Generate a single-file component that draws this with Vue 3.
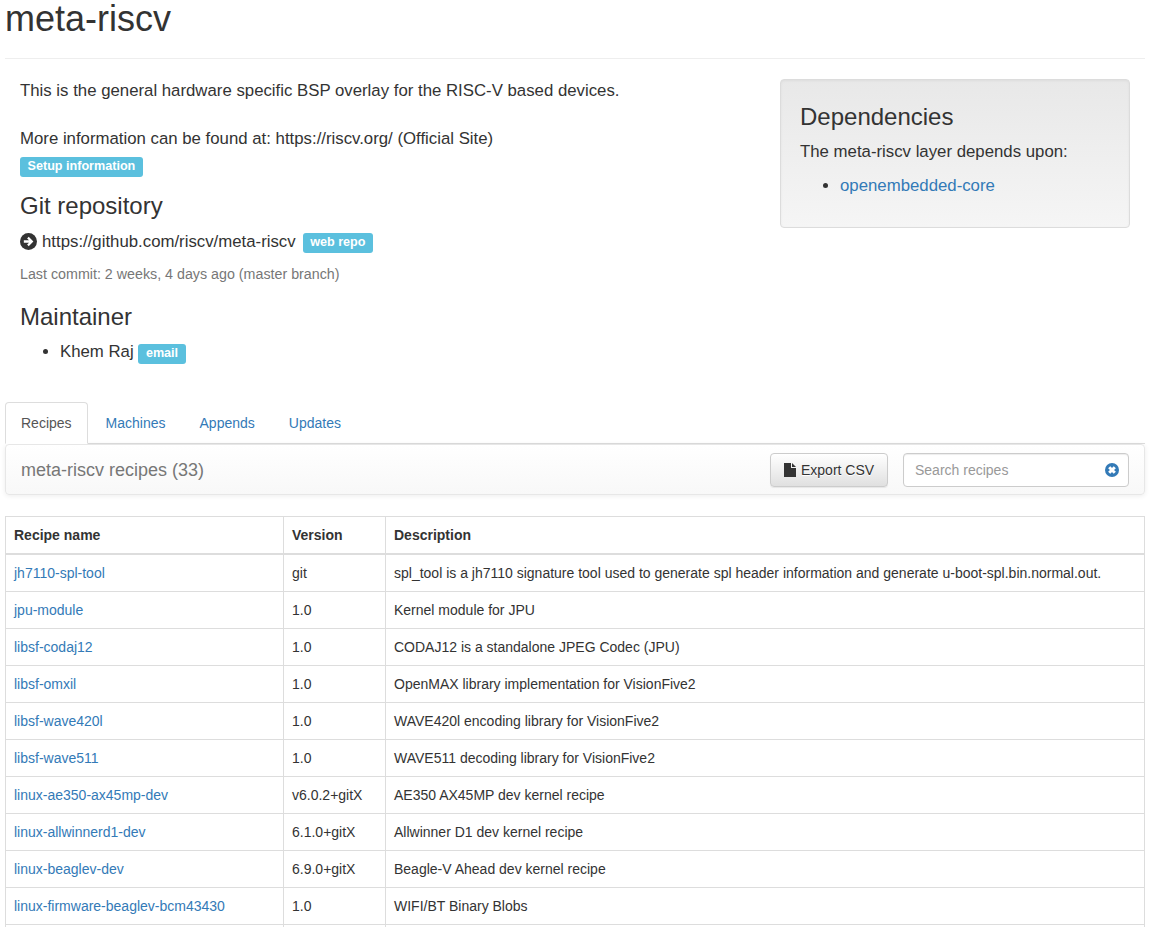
<script setup>
const tabs = ['Recipes', 'Machines', 'Appends', 'Updates']
const recipes = [
  ['jh7110-spl-tool', 'git', 'spl_tool is a jh7110 signature tool used to generate spl header information and generate u-boot-spl.bin.normal.out.'],
  ['jpu-module', '1.0', 'Kernel module for JPU'],
  ['libsf-codaj12', '1.0', 'CODAJ12 is a standalone JPEG Codec (JPU)'],
  ['libsf-omxil', '1.0', 'OpenMAX library implementation for VisionFive2'],
  ['libsf-wave420l', '1.0', 'WAVE420l encoding library for VisionFive2'],
  ['libsf-wave511', '1.0', 'WAVE511 decoding library for VisionFive2'],
  ['linux-ae350-ax45mp-dev', 'v6.0.2+gitX', 'AE350 AX45MP dev kernel recipe'],
  ['linux-allwinnerd1-dev', '6.1.0+gitX', 'Allwinner D1 dev kernel recipe'],
  ['linux-beaglev-dev', '6.9.0+gitX', 'Beagle-V Ahead dev kernel recipe'],
  ['linux-firmware-beaglev-bcm43430', '1.0', 'WIFI/BT Binary Blobs']
]
</script>

<template>
  <div class="page">
    <header class="page-header">
      <h1>meta-riscv</h1>
    </header>

    <section class="summary">
      <div class="info">
        <p class="intro">This is the general hardware specific BSP overlay for the RISC-V based devices.</p>
        <p class="intro more">More information can be found at: https://riscv.org/ (Official Site)</p>
        <a class="label setup" href="#">Setup information</a>

        <h3 class="git-title">Git repository</h3>
        <p class="repo">
          <svg class="arrow" viewBox="0 0 16 16" width="17" height="17">
            <circle cx="8" cy="8" r="8" fill="#333" />
            <path d="M8.200 3.600 12.600 8l-4.400 4.400-1.500-1.500 1.800-1.800H3.600V6.900h4.900L6.700 5.100z" fill="#fff" />
          </svg>
          <span class="repo-url">https://github.com/riscv/meta-riscv</span>
          <a class="label repo-label" href="#">web repo</a>
        </p>
        <p class="commit">Last commit: 2 weeks, 4 days ago (master branch)</p>

        <h3 class="maintainer-title">Maintainer</h3>
        <ul class="maintainers">
          <li>Khem Raj <a class="label repo-label" href="#">email</a></li>
        </ul>
      </div>

      <aside class="well">
        <h3>Dependencies</h3>
        <p>The meta-riscv layer depends upon:</p>
        <ul>
          <li><a href="#">openembedded-core</a></li>
        </ul>
      </aside>
    </section>

    <nav class="tabs">
      <a v-for="(tab, i) in tabs" :key="tab" href="#" class="tab" :class="{ active: i === 0 }">{{ tab }}</a>
    </nav>

    <div class="toolbar">
      <span class="toolbar-title">meta-riscv recipes (33)</span>
      <div class="toolbar-actions">
        <button class="btn" type="button">
          <svg viewBox="0 0 12 14" width="12" height="14">
            <path d="M0 0h7v5h5v9H0z" fill="#333" />
            <path d="M8 0l4 4H8z" fill="#333" />
          </svg>
          Export CSV
        </button>
        <div class="search">
          <span class="placeholder">Search recipes</span>
          <svg viewBox="0 0 14 14" width="14" height="14">
            <circle cx="7" cy="7" r="7" fill="#337ab7" />
            <path d="M4.200 4.200l5.600 5.600M9.800 4.200l-5.600 5.600" stroke="#fff" stroke-width="3" />
          </svg>
        </div>
      </div>
    </div>

    <table class="recipes">
      <colgroup>
        <col class="c1" />
        <col class="c2" />
        <col />
      </colgroup>
      <thead>
        <tr>
          <th>Recipe name</th>
          <th>Version</th>
          <th>Description</th>
        </tr>
      </thead>
      <tbody>
        <tr v-for="r in recipes" :key="r[0]">
          <td><a href="#">{{ r[0] }}</a></td>
          <td>{{ r[1] }}</td>
          <td>{{ r[2] }}</td>
        </tr>
        <tr>
          <td></td>
          <td></td>
          <td></td>
        </tr>
      </tbody>
    </table>
  </div>
</template>

<style>
html, body {
  margin: 0;
  height: 927px;
  overflow: hidden;
  background: #fff;
}
</style>

<style scoped>
.page {
  box-sizing: border-box;
  width: 1140px;
  margin-left: 5px;
  font-family: "Liberation Sans", Arial, sans-serif;
  font-size: 14px;
  line-height: 20px;
  color: #333;
}
a {
  color: #337ab7;
  text-decoration: none;
}
.page-header {
  margin-top: -1px;
  padding-bottom: 9px;
  border-bottom: 1px solid #eee;
  margin-bottom: 20px;
}
h1 {
  margin: 0 0 10px;
  font-size: 36px;
  font-weight: 500;
  line-height: 40px;
  color: #333;
}
h3 {
  margin: 0;
  font-size: 24px;
  font-weight: 500;
  line-height: 26px;
}
.summary {
  display: flex;
  justify-content: space-between;
  align-items: flex-start;
  padding: 0 15px;
}
.intro {
  margin: 0;
  font-size: 16.8px;
  line-height: 24px;
}
.more {
  margin-top: 24px;
}
.label {
  display: inline-block;
  box-sizing: border-box;
  height: 20px;
  padding: 0 7.56px;
  border-radius: 3px;
  background: #5bc0de;
  color: #fff;
  font-size: 12.6px;
  font-weight: 700;
  line-height: 19px;
  vertical-align: middle;
}
.setup {
  display: block;
  width: 123px;
  margin-top: 6px;
}
.git-title {
  margin-top: 16px;
}
.repo {
  display: flex;
  align-items: center;
  margin: 11px 0 0;
  font-size: 16.8px;
  line-height: 24px;
}
.arrow {
  margin: -2px 5px 0 0;
}
.repo-url {
  margin-right: 7px;
}
.repo-label {
  margin-top: 2px;
}
.commit {
  margin: 10px 0 0;
  color: #777;
  font-size: 14.28px;
  line-height: 20px;
}
.maintainer-title {
  margin-top: 20px;
}
.maintainers {
  margin: 10px 0 0;
  padding-left: 40px;
  font-size: 16.8px;
  line-height: 24px;
}
.well {
  box-sizing: border-box;
  width: 350px;
  height: 149px;
  padding: 24px 19px 0;
  border: 1px solid #dcdcdc;
  border-radius: 4px;
  background: linear-gradient(to bottom, #e8e8e8, #f5f5f5);
  box-shadow: inset 0 1px 3px rgba(0, 0, 0, .05), 0 1px 0 rgba(255, 255, 255, .1);
  font-size: 16.8px;
  line-height: 24px;
}
.well p {
  margin: 10px 0 0;
}
.well ul {
  margin: 10px 0 0;
  padding-left: 40px;
}
.tabs {
  display: flex;
  margin-top: 38px;
  height: 41px;
  border-bottom: 1px solid #ddd;
}
.tab {
  box-sizing: border-box;
  height: 41px;
  padding: 10px 15px;
  margin-right: 2px;
  border: 1px solid transparent;
  border-radius: 4px 4px 0 0;
}
.tab.active {
  border-color: #ddd;
  border-bottom-color: #fff;
  color: #555;
  background: #fff;
  height: 42px;
}
.toolbar {
  box-sizing: border-box;
  display: flex;
  justify-content: space-between;
  align-items: center;
  height: 51px;
  padding: 0 15px;
  border: 1px solid #e7e7e7;
  border-radius: 4px;
  background: linear-gradient(to bottom, #fff, #f8f8f8);
  box-shadow: inset 0 1px 0 rgba(255, 255, 255, .15), 0 1px 5px rgba(0, 0, 0, .075);
}
.toolbar-title {
  font-size: 18px;
  color: #777;
}
.toolbar-actions {
  display: flex;
  gap: 15px;
}
.btn {
  box-sizing: border-box;
  display: flex;
  align-items: center;
  gap: 5px;
  width: 118px;
  height: 34px;
  padding: 0 0 0 13px;
  border: 1px solid #ccc;
  border-radius: 4px;
  background: linear-gradient(to bottom, #fff, #e0e0e0);
  font: 14px/20px "Liberation Sans", Arial, sans-serif;
  color: #333;
  text-shadow: 0 1px 0 #fff;
  box-shadow: inset 0 1px 0 rgba(255, 255, 255, .15), 0 1px 1px rgba(0, 0, 0, .075);
}
.search {
  box-sizing: border-box;
  display: flex;
  justify-content: space-between;
  align-items: center;
  width: 226px;
  height: 34px;
  padding: 0 9px 0 11px;
  border: 1px solid #ccc;
  border-radius: 4px;
  background: #fff;
  box-shadow: inset 0 1px 1px rgba(0, 0, 0, .075);
}
.placeholder {
  color: #999;
}
.recipes {
  width: 1140px;
  margin-top: 21px;
  border-collapse: collapse;
  table-layout: fixed;
}
.c1 {
  width: 278px;
}
.c2 {
  width: 102px;
}
th, td {
  box-sizing: border-box;
  padding: 8px;
  border: 1px solid #ddd;
  height: 37px;
  text-align: left;
  vertical-align: top;
  line-height: 20px;
}
th {
  border-bottom: 2px solid #ddd;
  font-weight: 700;
}
</style>
